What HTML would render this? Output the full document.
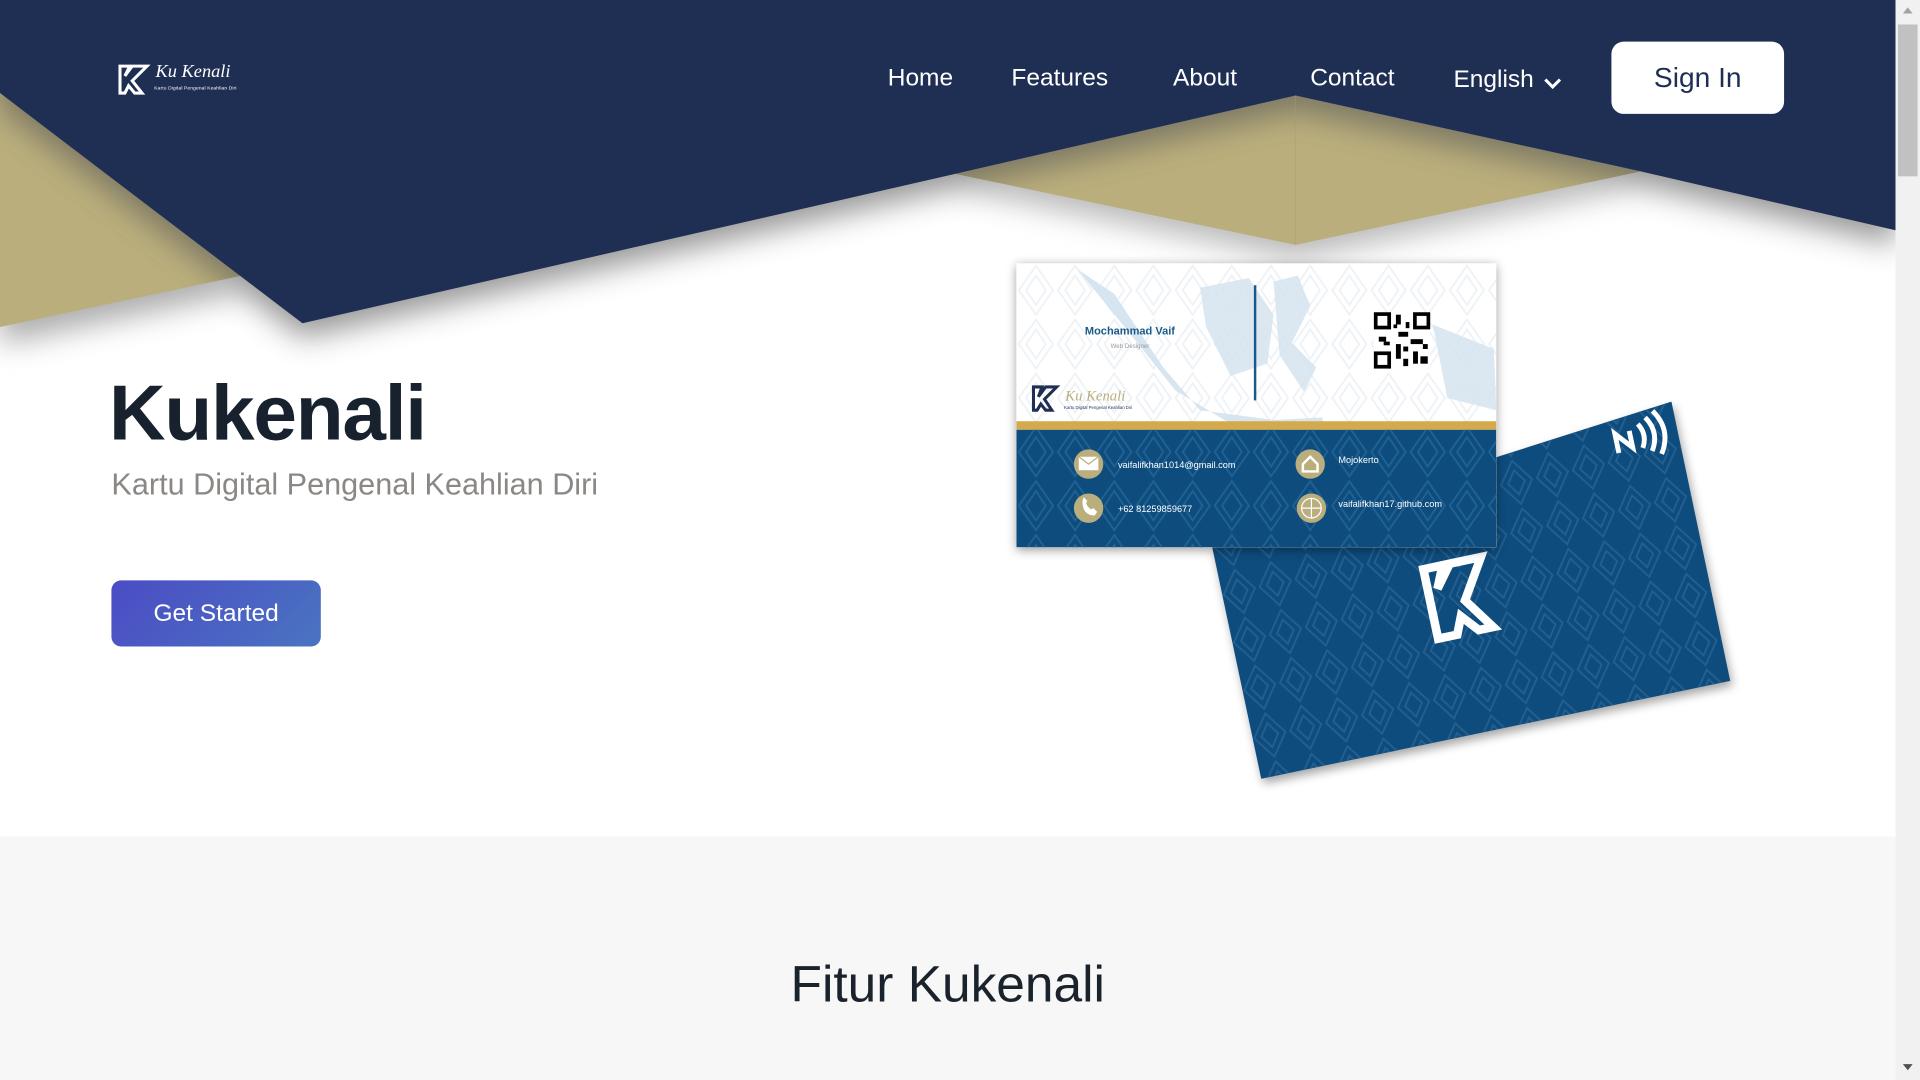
<!DOCTYPE html>
<html><head><meta charset="utf-8"><style>
html,body{margin:0;padding:0;width:1920px;height:1080px;overflow:hidden;background:#fff}
#s{position:absolute;left:0;top:0;width:1568px;height:882px;transform:scale(1.22449);transform-origin:0 0;font-family:"Liberation Sans",sans-serif;overflow:hidden;background:#fff}
.a{position:absolute}
.nav{color:#fff;font-size:20px;top:53px}
</style></head><body><div id="s">
<svg class="a" style="left:0;top:0" width="1548" height="320">
<defs><filter id="b" x="-10%" y="-30%" width="120%" height="170%"><feGaussianBlur stdDeviation="12"/></filter></defs>
<polygon points="0,76 198,225 0,267" fill="#777" opacity=".6" filter="url(#b)" transform="translate(0,14)"/>
<polygon points="0,76 198,225 0,267" fill="#baae7c"/>
<polygon points="780,142 1058,78 1340,140 1058,200" fill="#777" opacity=".5" filter="url(#b)" transform="translate(0,12)"/>
<polygon points="780,142 1058,78 1340,140 1058,200" fill="#baae7c"/>
<polygon points="1340,140 1548,188 1548,0 0,0 0,76 247,264 780,142 1058,78" fill="#555" opacity=".6" filter="url(#b)" transform="translate(0,12)"/>
<polygon points="0,0 1548,0 1548,188 1340,140 1058,78 780,142 247,264 0,76" fill="#1f2f54"/>
<line x1="1058" y1="78" x2="1058" y2="200" stroke="#a89c6a" stroke-width="1" opacity=".4"/>
</svg>
<!-- logo -->
<svg class="a" style="left:96px;top:52px" width="30" height="26" viewBox="0 0 30 26"><path d="M2 2h8l-4 8 6-8h12L12 14l8 10h-6l-5-6-3 6H2z" fill="none" stroke="#fff" stroke-width="2.5"/></svg>
<div class="a" style="left:127px;top:51px;color:#fff;font:italic 15px 'Liberation Serif',serif">Ku Kenali</div>
<div class="a" style="left:126px;top:69px;color:#fff;font-size:4px;letter-spacing:.1px">Kartu Digital Pengenal Keahlian Diri</div>
<div class="a nav" style="left:725px">Home</div>
<div class="a nav" style="left:826px">Features</div>
<div class="a nav" style="left:958px">About</div>
<div class="a nav" style="left:1070px">Contact</div>
<div class="a nav" style="left:1187px;top:54px">English</div>
<svg class="a" style="left:1260px;top:62px" width="16" height="12"><path d="M2 3l6 6 6-6" stroke="#fff" stroke-width="2.5" fill="none"/></svg>
<div class="a" style="left:1316px;top:34px;width:141px;height:59px;background:#fff;border-radius:10px;color:#1f2f54;font-size:23px;line-height:59px;text-align:center">Sign In</div>
<div class="a" style="left:89px;top:300px;font-size:64px;font-weight:bold;color:#18222f;letter-spacing:-1px">Kukenali</div>
<div class="a" style="left:91px;top:382px;font-size:25px;color:#8a8785">Kartu Digital Pengenal Keahlian Diri</div>
<div class="a" style="left:91px;top:474px;width:171px;height:54px;border-radius:8px;background:linear-gradient(135deg,#4b4cc4,#4a74c2);color:#fff;font-size:20px;line-height:54px;text-align:center">Get Started</div>
<!-- back card -->
<svg class="a" style="left:960px;top:310px" width="480" height="350">
<defs><pattern id="d" width="30" height="40" patternUnits="userSpaceOnUse" patternTransform="rotate(-12)"><path d="M15 2L28 20 15 38 2 20z M15 10L22 20 15 30 8 20z" fill="none" stroke="#2a6494" stroke-width="1.5"/></pattern>
<filter id="sh"><feGaussianBlur stdDeviation="4"/></filter></defs>
<polygon points="30,137 70,326 453,246 405,18" fill="#000" opacity=".35" filter="url(#sh)" transform="translate(2,4)"/>
<polygon points="30,137 70,326 453,246 405,18" fill="#0e4c7d"/>
<polygon points="30,137 70,326 453,246 405,18" fill="url(#d)" opacity=".8"/>
<g transform="translate(238,178) rotate(-12)" fill="none" stroke="#fff" stroke-width="7"><path d="M-30 -30h16l-8 18 14-18h26L-2 2l18 26h-12l-12-14-6 14h-16z"/></g>
<g transform="translate(380,48) rotate(-12)" stroke="#fff" stroke-width="4" fill="none"><path d="M-20 8v-16l12 14v-14"/><path d="M0 -12q6 10 0 20M7 -16q9 14 0 28M14 -20q12 18 0 36"/></g>
</svg>
<!-- front card -->
<div class="a" style="left:830px;top:215px;width:392px;height:232px;box-shadow:0 2px 8px rgba(0,0,0,.4);background:#fff;overflow:hidden">
<svg class="a" style="left:0;top:0" width="392" height="232">
<defs><pattern id="w" width="32" height="44" patternUnits="userSpaceOnUse"><path d="M16 2L30 22 16 42 2 22z M16 10L24 22 16 34 8 22z" fill="none" stroke="#eef2f6" stroke-width="1.5"/></pattern>
<pattern id="bl" width="32" height="44" patternUnits="userSpaceOnUse"><path d="M16 2L30 22 16 42 2 22z M16 10L24 22 16 34 8 22z" fill="none" stroke="#1f6294" stroke-width="1.5"/></pattern></defs>
<rect width="392" height="130" fill="url(#w)"/>
<path d="M50 5l30 20 40 60 30 35 60 8 40-2 0 10-70 -2-50-30-40-50z" fill="#d3e2ee" opacity=".9"/>
<path d="M150 20l40-8 20 30-5 40-30 10-20-40z" fill="#d3e2ee" opacity=".8"/>
<path d="M210 15l20-5 10 25-15 30 20 20 -10 20-20-30z" fill="#d3e2ee" opacity=".8"/>
<path d="M340 50l50 20 2 50-40-10z" fill="#d3e2ee" opacity=".8"/>
<line x1="195" y1="18" x2="195" y2="112" stroke="#1a5a8a" stroke-width="2"/>
<rect x="0" y="129" width="392" height="7" fill="#d4aa4c"/>
<rect x="0" y="136" width="392" height="96" fill="#0e4c7d"/>
<rect x="0" y="136" width="392" height="96" fill="url(#bl)"/>
<g fill="#000"><rect x="292" y="40" width="46" height="46" fill="#fff"/>
<rect x="292" y="40" width="14" height="14"/><rect x="324" y="40" width="14" height="14"/><rect x="292" y="72" width="14" height="14"/>
<rect x="295" y="43" width="8" height="8" fill="#fff"/><rect x="327" y="43" width="8" height="8" fill="#fff"/><rect x="295" y="75" width="8" height="8" fill="#fff"/>
<rect x="310" y="42" width="4" height="8"/><rect x="312" y="56" width="8" height="4"/><rect x="296" y="60" width="6" height="4"/><rect x="310" y="66" width="4" height="12"/><rect x="322" y="62" width="10" height="4"/><rect x="324" y="72" width="4" height="10"/><rect x="330" y="76" width="6" height="6"/><rect x="316" y="78" width="4" height="6"/><rect x="308" y="50" width="3" height="3"/><rect x="318" y="48" width="3" height="5"/><rect x="300" y="64" width="5" height="3"/><rect x="316" y="68" width="4" height="4"/><rect x="332" y="66" width="4" height="4"/></g>
<g transform="translate(13,100)" fill="none" stroke="#1f2f54" stroke-width="2.5"><path d="M1 1h7l-3 8 6-8h9L10 11l6 9h-5l-4-5-3 5H1z"/></g>
<circle cx="59" cy="164" r="12" fill="#baae7c"/><circle cx="59" cy="200" r="12" fill="#baae7c"/>
<circle cx="240" cy="164" r="12" fill="#baae7c"/><circle cx="241" cy="200" r="12" fill="#baae7c"/>
<rect x="51" y="158" width="16" height="11" fill="#fff"/><path d="M51 158l8 6 8-6" stroke="#baae7c" fill="none"/>
<path d="M234 164l6-6 6 6v6h-12z" stroke="#fff" stroke-width="2" fill="none"/>
<circle cx="241" cy="200" r="8" stroke="#fff" fill="none"/><path d="M233 200h16M241 192v16" stroke="#fff"/>
<path d="M54 194q0 12 10 12l2-3-3-3-2 1q-3-2-4-5l1-2-3-3z" fill="#fff"/>
</svg>
<div class="a" style="left:56px;top:50px;font-size:9px;color:#1a5a8a;font-weight:bold">Mochammad Vaif</div>
<div class="a" style="left:77px;top:65px;font-size:5px;color:#999">Web Designer</div>
<div class="a" style="left:40px;top:101px;font:italic 12px 'Liberation Serif',serif;color:#baae7c">Ku Kenali</div>
<div class="a" style="left:39px;top:116px;font-size:3.5px;color:#1f2f54">Kartu Digital Pengenal Keahlian Diri</div>
<div class="a" style="left:83px;top:160px;font-size:7.5px;color:#fff">vaifalifkhan1014@gmail.com</div>
<div class="a" style="left:83px;top:196px;font-size:7.5px;color:#fff">+62 81259859677</div>
<div class="a" style="left:263px;top:156px;font-size:7.5px;color:#fff">Mojokerto</div>
<div class="a" style="left:263px;top:192px;font-size:7.5px;color:#fff">vaifalifkhan17.github.com</div>
</div>
<div class="a" style="left:0;top:683px;width:1548px;height:199px;background:#f7f7f7"></div>
<div class="a" style="left:0;top:780px;width:1548px;text-align:center;font-size:42px;color:#1a222c">Fitur Kukenali</div>
<!-- scrollbar -->
<div class="a" style="left:1548px;top:0;width:20px;height:882px;background:#f1f1f1"></div>
<div class="a" style="left:1550px;top:20px;width:16px;height:124px;background:#c1c1c1"></div>
<svg class="a" style="left:1552px;top:4px" width="12" height="8"><path d="M2 7l4-5 4 5z" fill="#a3a3a3"/></svg>
<svg class="a" style="left:1552px;top:868px" width="12" height="8"><path d="M2 1l4 5 4-5z" fill="#505050"/></svg>
</div></body></html>
